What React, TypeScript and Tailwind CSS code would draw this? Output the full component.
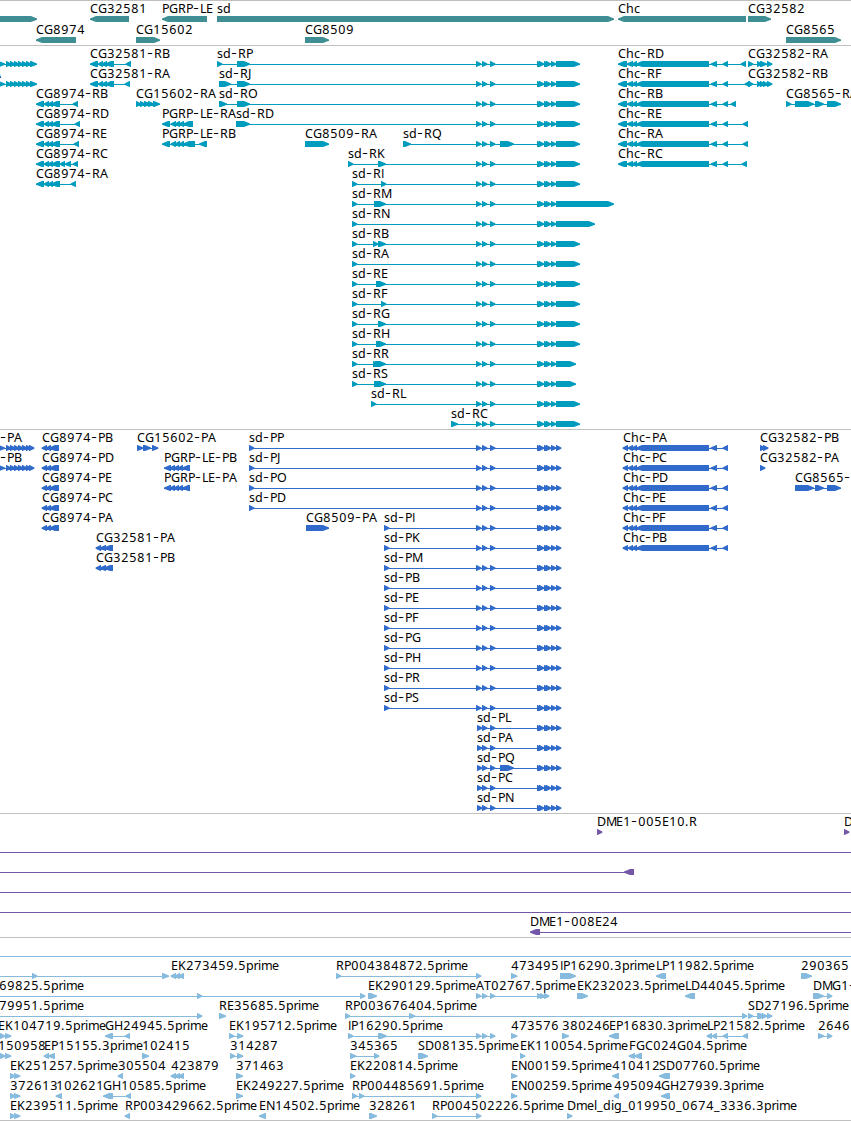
type Exon = [number, number];

type Feature = {
  label?: string;
  x?: number; // label position, defaults to the start of the first exon
  dir?: "-";
  from?: number;
  to?: number;
  exons: Exon[];
};

type Row = Feature[];

// advance of each glyph in pixels, digits are 8
const ADVANCE: Record<string, number> = {
  A: 8, B: 7, C: 8, D: 9, E: 7, F: 7, G: 9, H: 9, I: 3, J: 4, K: 8, L: 6, M: 10,
  N: 9, O: 9, P: 7, Q: 9, R: 8, S: 7, T: 7, "-": 7, ".": 4, _: 6,
  c: 6, d: 8, e: 7, g: 8, h: 8, i: 3, l: 3, m: 11, p: 7.5, r: 4.5, s: 6,
};

const glyphXs = (text: string, x: number) => {
  const xs: number[] = [];
  for (const ch of text) {
    xs.push(ch >= "0" && ch <= "9" ? x + 0.3 : x);
    x += ADVANCE[ch] ?? 8;
  }
  return xs.join(" ");
};

const fwd = (label: string, exons: Exon[]): Feature => ({ label, exons });
const rev = (label: string, exons: Exon[]): Feature => ({ label, exons, dir: "-" });

const genes: Row[] = [
  [
    { exons: [[-10, 37]] },
    rev("CG32581", [[90, 129]]),
    rev("PGRP-LE", [[162, 207]]),
    fwd("sd", [[217, 614]]),
    rev("Chc", [[618, 746]]),
    fwd("CG32582", [[748, 771]]),
  ],
  [
    rev("CG8974", [[36, 76]]),
    fwd("CG15602", [[136, 160]]),
    fwd("CG8509", [[305, 329]]),
    fwd("CG8565", [[786, 841]]),
  ],
];

const sdCore: Exon[] = [[476, 481], [482, 487], [490, 495]];
const sdTail: Exon[] = [[537, 542], [539, 544], [544, 549], [546, 551], [551, 556]];

const sdR = (name: string, head: Exon[], end = 580, mid: Exon[] = []) =>
  fwd(`sd-${name}`, [...head, ...sdCore, ...mid, ...sdTail, [556, end]]);
const sdP = (name: string, head: Exon[]) =>
  fwd(`sd-${name}`, [...head, ...sdCore, ...sdTail, [556, 561]]);
const sdShort = (name: string, mid: Exon[] = []) =>
  fwd(`sd-${name}`, [[477, 482], [482, 487], [490, 495], ...mid, ...sdTail, [556, 561]]);

const leftR: Feature = {
  exons: [[-4, 5], [6, 11], [10, 15], [14, 19], [18, 23], [22, 27], [26, 31], [30, 37]],
};
const leftP: Feature = {
  exons: [[-4, 5], [6, 11], [10, 15], [14, 19], [18, 23], [22, 27], [26, 31], [29, 34]],
};

const cg8974R = (name: string, tail: Exon[]) =>
  rev(`CG8974-${name}`, [[36, 44], [44, 49], [48, 53], [51, 60], ...tail]);
const cg8974P = (name: string) => rev(`CG8974-${name}`, [[42, 47], [46, 51], [49, 59]]);
const chcR = (name: string, last: Exon) =>
  rev(`Chc-${name}`, [[618, 627], [627, 633], [632, 637], [636, 709], [711, 717], [723, 728], last]);
const chcP = (name: string) =>
  rev(`Chc-${name}`, [[623, 628], [628, 633], [632, 637], [636, 709], [711, 717], [723, 728]]);

const transcripts: Row[] = [
  [
    leftR,
    rev("CG32581-RB", [[90, 98], [98, 103], [102, 107], [105, 114], [126, 131]]),
    sdR("RP", [[217, 222], [237, 250]]),
    chcR("RD", [741, 746]),
    fwd("CG32582-RA", [[748, 753], [757, 762], [760, 767], [767, 772]]),
  ],
  [
    { ...leftR, label: "A", x: -7 },
    rev("CG32581-RA", [[90, 98], [98, 103], [102, 107], [105, 114], [125, 130]]),
    sdR("RJ", [[219, 231], [237, 250]]),
    chcR("RF", [745, 750]),
    fwd("CG32582-RB", [[748, 753], [757, 762], [760, 765], [763, 768], [767, 772]]),
  ],
  [
    cg8974R("RB", [[73, 78]]),
    fwd("CG15602-RA", [[136, 141], [140, 145], [144, 150], [148, 154], [153, 160]]),
    sdR("RO", [[219, 227], [237, 250]]),
    chcR("RB", [731, 736]),
    fwd("CG8565-RA", [[786, 791], [795, 814], [815, 824], [827, 841]]),
  ],
  [
    cg8974R("RD", [[75, 80]]),
    rev("PGRP-LE-RA", [[162, 170], [171, 176], [175, 180], [179, 184], [183, 193]]),
    sdR("RD", [[236, 250]]),
    chcR("RE", [743, 748]),
  ],
  [
    cg8974R("RE", [[74, 79]]),
    rev("PGRP-LE-RB", [[162, 170], [171, 176], [175, 180], [179, 184], [183, 195], [199, 207]]),
    fwd("CG8509-RA", [[305, 329]]),
    sdR("RQ", [[403, 411]], 580, [[500, 514]]),
    chcR("RA", [743, 748]),
  ],
  [
    cg8974R("RC", [[60, 65], [65, 71], [73, 78]]),
    sdR("RK", [[348, 353], [378, 386]]),
    chcR("RC", [742, 747]),
  ],
  [cg8974R("RA", [[71, 76]]), sdR("RI", [[352, 357], [381, 386]])],
  [sdR("RM", [[352, 357], [374, 386]], 614)],
  [sdR("RN", [[352, 357]], 595)],
  [sdR("RB", [[352, 357], [373, 378], [378, 386]])],
  [sdR("RA", [[352, 357]])],
  [sdR("RE", [[352, 357], [376, 386]])],
  [sdR("RF", [[352, 357], [381, 386]])],
  [sdR("RG", [[352, 357], [378, 386]])],
  [sdR("RH", [[352, 357], [376, 386]])],
  [sdR("RR", [[352, 357], [373, 378], [375, 386]], 576)],
  [sdR("RS", [[352, 357], [374, 386]], 576)],
  [sdR("RL", [[371, 376]])],
  [sdR("RC", [[451, 458]])],
];

const proteins: Row[] = [
  [
    { ...leftP, label: "-PA", x: 0 },
    cg8974P("PB"),
    fwd("CG15602-PA", [[137, 143], [143, 151], [152, 158]]),
    sdP("PP", [[249, 254]]),
    chcP("PA"),
    fwd("CG32582-PB", [[760, 765], [763, 768]]),
  ],
  [
    { ...leftP, label: "-PB", x: 0 },
    cg8974P("PD"),
    rev("PGRP-LE-PB", [[164, 171], [170, 175], [174, 179], [178, 183], [182, 190]]),
    sdP("PJ", [[249, 254]]),
    chcP("PC"),
    fwd("CG32582-PA", [[760, 765]]),
  ],
  [
    cg8974P("PE"),
    rev("PGRP-LE-PA", [[164, 171], [170, 175], [174, 179], [178, 183], [182, 190]]),
    sdP("PO", [[249, 254]]),
    chcP("PD"),
    fwd("CG8565-", [[795, 814], [815, 824], [827, 841]]),
  ],
  [cg8974P("PC"), sdP("PD", [[249, 254]]), chcP("PE")],
  [cg8974P("PA"), fwd("CG8509-PA", [[306, 329]]), sdP("PI", [[384, 389]]), chcP("PF")],
  [rev("CG32581-PA", [[96, 101], [100, 106], [104, 113]]), sdP("PK", [[384, 389]]), chcP("PB")],
  [rev("CG32581-PB", [[96, 101], [100, 106], [104, 113]]), sdP("PM", [[384, 389]])],
  [sdP("PB", [[384, 389]])],
  [sdP("PE", [[384, 389]])],
  [sdP("PF", [[384, 389]])],
  [sdP("PG", [[384, 389]])],
  [sdP("PH", [[384, 389]])],
  [sdP("PR", [[384, 389]])],
  [sdP("PS", [[384, 389]])],
  [sdShort("PL")],
  [sdShort("PA")],
  [sdShort("PQ", [[500, 514]])],
  [sdShort("PC")],
  [sdShort("PN")],
];

const fullLine: Feature = { from: 0, to: 851, exons: [] };

const clones: Row[] = [
  [fwd("DME1-005E10.R", [[597, 602]]), fwd("D", [[844, 849]])],
  [fullLine],
  [{ dir: "-", from: 0, exons: [[624, 634]] }],
  [fullLine],
  [fullLine],
  [{ label: "DME1-008E24", dir: "-", to: 851, exons: [[530, 540]] }],
];

const ests: Row[] = [
  [fullLine],
  [
    { from: 0, exons: [[32, 37], [162, 169]] },
    rev("EK273459.5prime", [[171, 176], [175, 180], [178, 184]]),
    fwd("RP004384872.5prime", [[336, 341], [476, 481]]),
    fwd("473495", [[511, 517]]),
    fwd("IP16290.3prime", [[560, 576]]),
    rev("LP11982.5prime", [[656, 666]]),
    fwd("290365", [[801, 812]]),
  ],
  [
    { label: "69825.5prime", x: -1, from: 0, exons: [[197, 202], [360, 365]] },
    fwd("EK290129.5prime", [[368, 377]]),
    fwd("AT02767.5prime", [[476, 481], [482, 487], [490, 495], [537, 542], [540, 545], [544, 549]]),
    fwd("EK232023.5prime", [[577, 588]]),
    rev("LD44045.5prime", [[685, 695]]),
    fwd("DMG1-", [[813, 824], [827, 832]]),
  ],
  [
    { label: "79951.5prime", x: -1, from: 0, exons: [[197, 202]] },
    fwd("RE35685.5prime", [[219, 226]]),
    fwd("RP003676404.5prime", [[345, 350], [409, 415], [742, 747]]),
    fwd("SD27196.5prime", [[748, 753], [757, 766], [762, 767], [767, 772]]),
  ],
  [
    { label: "EK104719.5prime", x: -2, exons: [[0, 5], [5, 11]] },
    rev("GH24945.5prime", [[105, 113], [125, 130]]),
    fwd("EK195712.5prime", [[229, 234], [237, 243]]),
    fwd("IP16290.5prime", [[348, 353], [378, 387], [476, 481], [482, 487], [490, 495]]),
    fwd("473576", [[511, 517]]),
    fwd("380246", [[562, 569]]),
    rev("EP16830.3prime", [[609, 619]]),
    rev("LP21582.5prime", [[707, 712], [712, 717], [723, 728], [743, 748]]),
    fwd("2646", [[818, 824], [827, 832]]),
  ],
  [
    { label: "150958", x: -2, exons: [[0, 5], [5, 11]] },
    rev("EP15155.3prime", [[44, 49], [48, 55]]),
    fwd("102415", [[142, 149]]),
    fwd("314287", [[230, 235], [237, 243]]),
    fwd("345365", [[350, 356], [374, 379]]),
    fwd("SD08135.5prime", [[418, 428]]),
    fwd("EK110054.5prime", [[520, 525]]),
    rev("FGC024G04.5prime", [[629, 635], [634, 642]]),
  ],
  [
    fwd("EK251257.5prime", [[10, 15], [14, 20]]),
    rev("305504", [[118, 123]]),
    rev("423879", [[171, 176], [175, 180], [178, 184]]),
    fwd("371463", [[236, 243]]),
    fwd("EK220814.5prime", [[350, 355]]),
    fwd("EN00159.5prime", [[511, 517]]),
    rev("410412", [[612, 619]]),
    rev("SD07760.5prime", [[659, 670]]),
  ],
  [
    fwd("372613", [[10, 15], [14, 20]]),
    rev("102621", [[56, 62]]),
    rev("GH10585.5prime", [[103, 113], [126, 131]]),
    fwd("EK249227.5prime", [[236, 243]]),
    fwd("RP004485691.5prime", [[352, 357], [359, 364], [476, 481]]),
    fwd("EN00259.5prime", [[511, 517]]),
    rev("495094", [[614, 619]]),
    rev("GH27939.3prime", [[661, 670]]),
  ],
  [
    fwd("EK239511.5prime", [[10, 15], [14, 20]]),
    rev("RP003429662.5prime", [[125, 130]]),
    rev("EN14502.5prime", [[259, 266]]),
    fwd("328261", [[369, 377]]),
    fwd("RP004502226.5prime", [[432, 437], [476, 481]]),
    fwd("Dmel_dig_019950_0674_3336.3prime", [[567, 572]]),
  ],
];

// box with a pointed end, 6px high; the short ones are plain triangles
function exonPath([a, b]: Exon, dir?: "-") {
  const head = Math.min(6, b - a - 0.5);
  const tip = b - a > 6 ? 0 : 0.4;
  if (dir === "-") {
    return `M${b} 14H${a + head}L${a - tip} 16.5V17.8L${a + head} 20H${b}Z`;
  }
  return `M${a} 14H${b - head}L${b + tip} 16.5V17.8L${b - head} 20H${a}Z`;
}

function Label({ text, x }: { text: string; x: number }) {
  return (
    <text x={glyphXs(text, x)} y={11} className="fill-black">
      {text.split(/([-I])/).map((part, i) => {
        // wide dash, and a capital i without serifs
        if (part === "-") return <tspan key={i} className="font-['Inter',sans-serif] text-[13px]">-</tspan>;
        if (part === "I") return <tspan key={i} className="font-['Open_Sans',sans-serif]">I</tspan>;
        return part;
      })}
    </text>
  );
}

function FeatureGlyph({ feature }: { feature: Feature }) {
  const { exons, dir, label } = feature;
  const from = feature.from ?? exons[0][0];
  const to = feature.to ?? exons[exons.length - 1][1];
  return (
    <g>
      <rect x={from} y={17} width={to - from} height={1} />
      {exons.length > 0 && <path d={exons.map((e) => exonPath(e, dir)).join("")} />}
      {label && <Label text={label} x={feature.x ?? from} />}
    </g>
  );
}

function Track({ rows, color, tall }: { rows: Row[]; color: string; tall?: boolean }) {
  return (
    <section className={`flex flex-col border-t border-[#c0c0c0] pt-px ${tall ? "pb-px" : "pb-0.5"} ${color}`}>
      {rows.map((row, i) => (
        <svg
          key={i}
          className={`block w-full shrink-0 overflow-visible fill-current ${tall ? "h-[21px]" : "h-5"}`}
        >
          {row.map((feature, j) => (
            <FeatureGlyph key={j} feature={feature} />
          ))}
        </svg>
      ))}
    </section>
  );
}

export default function App() {
  return (
    <main className="h-[1121px] w-[851px] overflow-hidden bg-white font-['Noto_Sans','DejaVu_Sans',sans-serif] text-[12.5px]">
      <Track rows={genes} color="text-[#3f8e93]" tall />
      <Track rows={transcripts} color="text-[#009cbd]" />
      <Track rows={proteins} color="text-[#306bcb]" />
      <Track rows={clones} color="text-[#7458a8]" />
      <Track rows={ests} color="text-[#87bbde]" />
      <div className="-mt-px h-px bg-[#c0c0c0]" />
    </main>
  );
}
